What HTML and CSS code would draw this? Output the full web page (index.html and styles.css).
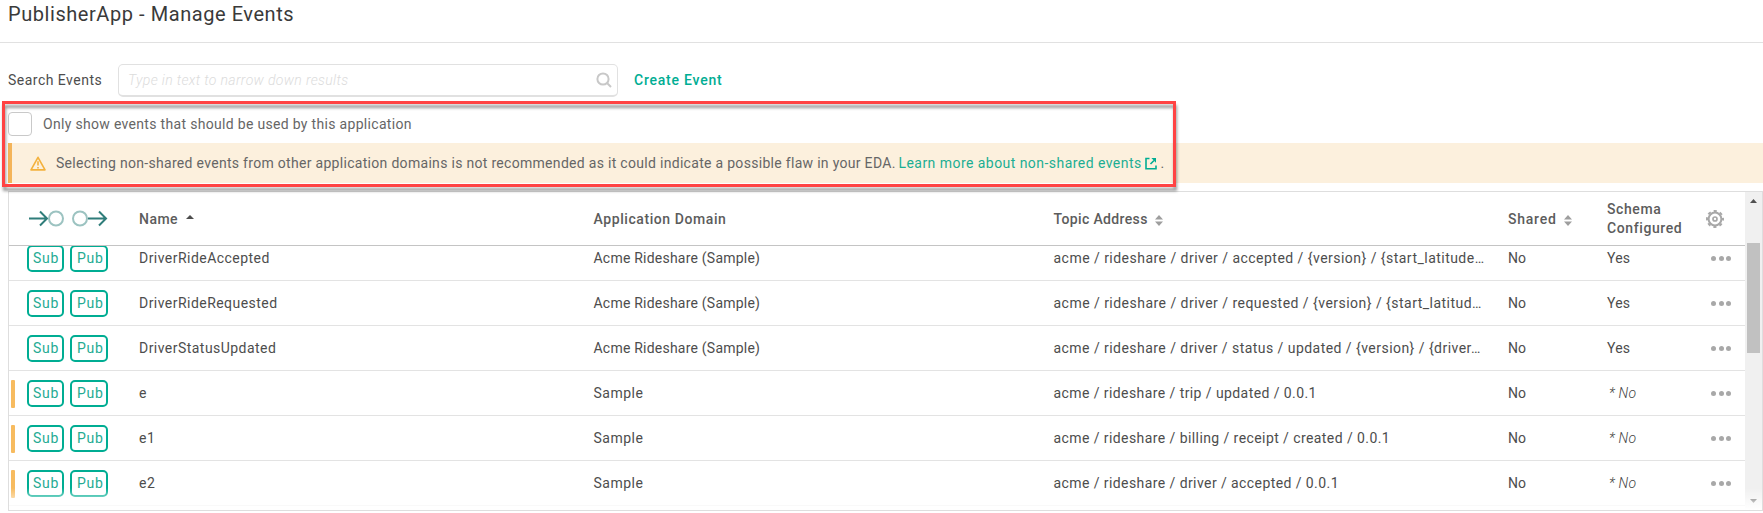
FILE: index.html
```html
<!DOCTYPE html>
<html lang="en">
<head>
<meta charset="utf-8">
<title>PublisherApp - Manage Events</title>
<link rel="stylesheet" href="styles.css">
</head>
<body>
<header class="title-bar"><h1>PublisherApp - Manage Events</h1></header>
<main>
  <div class="search-row">
    <label class="search-label">Search Events</label>
    <div class="search-box">
      <span class="placeholder">Type in text to narrow down results</span>
      <svg width="16" height="16" viewBox="0 0 16 16" fill="none" stroke="#c8c8c8" stroke-width="2"><circle cx="7" cy="7" r="5.6"/><path d="M11 11l4 4"/></svg>
    </div>
    <a class="create">Create Event</a>
  </div>
  <div class="filter-area">
    <div class="filter"><span class="checkbox"></span><span class="filter-text">Only show events that should be used by this application</span></div>
    <div class="warning">
      <svg class="warn-icon" width="16" height="15" viewBox="0 0 16 15" fill="none" stroke="#f3b13c" stroke-width="1.6" stroke-linejoin="round"><path d="M8 1.3L15 13.9H1z"/><path d="M8 5.3v4.2M8 10.9v1.5"/></svg>
      <span class="warn-text">Selecting non-shared events from other application domains is not recommended as it could indicate a possible flaw in your EDA.</span>
      <a class="learn">Learn more about non-shared events</a>
      <svg class="ext" width="12" height="13" viewBox="0 0 12 13" fill="none" stroke="#00ad93" stroke-width="1.6"><path d="M4.5 1.5H1v10.3h10V8.5M5.500 7L9 3.500"/><path d="M6.4 1H11v4.7z" fill="#00ad93" stroke="none"/></svg>
      <span class="dot">.</span>
    </div>
    <div class="highlight"></div>
  </div>
  <section class="table">
    <div class="grid">
      <div class="head">
        <span class="flow">
          <svg width="79" height="17" viewBox="0 0 79 17" fill="none"><g stroke="#2f7d7a" stroke-width="2"><path d="M0 8.5h18M11 1.5l7 7-7 7M59 8.5h18M70 1.5l7 7-7 7"/></g><g stroke="#9cc3c1" stroke-width="2"><circle cx="27" cy="8.5" r="7"/><circle cx="51" cy="8.5" r="7"/></g></svg>
        </span>
        <span class="h-name">Name<svg width="8" height="4" viewBox="0 0 8 4" fill="#4d4d4d"><path d="M0 4l4-4 4 4z"/></svg></span>
        <span class="h-domain">Application Domain</span>
        <span class="h-topic">Topic Address<svg class="sort" width="8" height="11" viewBox="0 0 8 11" fill="#9e9e9e"><path d="M0 4.5L4 0l4 4.5zM0 6.5h8L4 11z"/></svg></span>
        <span class="h-shared">Shared<svg class="sort" width="8" height="11" viewBox="0 0 8 11" fill="#9e9e9e"><path d="M0 4.5L4 0l4 4.5zM0 6.5h8L4 11z"/></svg></span>
        <span class="h-schema">Schema<br>Configured</span>
        <span class="gear"><svg width="18" height="18" viewBox="0 0 18 18" fill="none" stroke="#a8a8a8"><circle cx="9" cy="9" r="6.4" stroke-width="2"/><circle cx="9" cy="9" r="8" stroke-width="2" stroke-dasharray="3.14 3.143" stroke-dashoffset="1.57"/><circle cx="9" cy="9" r="2" stroke-width="1.7"/></svg></span>
      </div>
      <div class="rows">
        <div class="row"><span class="mark"></span><span class="badges"><b class="sub">Sub</b><b class="pub">Pub</b></span><span class="name">DriverRideAccepted</span><span class="domain">Acme Rideshare (Sample)</span><span class="topic">acme / rideshare / driver / accepted / {version} / {start_latitude…</span><span class="shared">No</span><span class="yes">Yes</span><span class="more"><i></i><i></i><i></i></span></div>
        <div class="row"><span class="mark"></span><span class="badges"><b class="sub">Sub</b><b class="pub">Pub</b></span><span class="name">DriverRideRequested</span><span class="domain">Acme Rideshare (Sample)</span><span class="topic">acme / rideshare / driver / requested / {version} / {start_latitud…</span><span class="shared">No</span><span class="yes">Yes</span><span class="more"><i></i><i></i><i></i></span></div>
        <div class="row"><span class="mark"></span><span class="badges"><b class="sub">Sub</b><b class="pub">Pub</b></span><span class="name">DriverStatusUpdated</span><span class="domain">Acme Rideshare (Sample)</span><span class="topic t-status">acme / rideshare / driver / status / updated / {version} / {driver…</span><span class="shared">No</span><span class="yes">Yes</span><span class="more"><i></i><i></i><i></i></span></div>
        <div class="row"><span class="mark on"></span><span class="badges"><b class="sub">Sub</b><b class="pub">Pub</b></span><span class="name">e</span><span class="domain d-short">Sample</span><span class="topic t-short">acme / rideshare / trip / updated / 0.0.1</span><span class="shared">No</span><span class="no">* No</span><span class="more"><i></i><i></i><i></i></span></div>
        <div class="row"><span class="mark on"></span><span class="badges"><b class="sub">Sub</b><b class="pub">Pub</b></span><span class="name">e1</span><span class="domain d-short">Sample</span><span class="topic t-short">acme / rideshare / billing / receipt / created / 0.0.1</span><span class="shared">No</span><span class="no">* No</span><span class="more"><i></i><i></i><i></i></span></div>
        <div class="row"><span class="mark on"></span><span class="badges"><b class="sub">Sub</b><b class="pub">Pub</b></span><span class="name">e2</span><span class="domain d-short">Sample</span><span class="topic t-short">acme / rideshare / driver / accepted / 0.0.1</span><span class="shared">No</span><span class="no">* No</span><span class="more"><i></i><i></i><i></i></span></div>
      </div>
    </div>
    <div class="scrollbar">
      <svg width="7" height="4" viewBox="0 0 7 4" fill="#505050"><path d="M0 4l3.5-4L7 4z"/></svg>
      <div class="thumb"></div>
      <svg width="7" height="4" viewBox="0 0 7 4" fill="#505050"><path d="M0 0h7L3.500 4z"/></svg>
    </div>
    <div class="fade"></div>
  </section>
</main>
</body>
</html>
```
FILE: styles.css
```css
* { box-sizing: border-box; }
body { margin: 0; height: 513px; overflow: hidden; background: #fff; color: #4d4d4d; font: 14px/20px Roboto, "Liberation Sans", sans-serif; white-space: nowrap; }
svg { display: block; flex: none; }
.title-bar { height: 43px; padding: 2px 0 0 8px; border-bottom: 1px solid #e1e1e1; }
h1 { margin: 0; font-size: 20px; line-height: 25px; font-weight: 400; letter-spacing: .56px; color: #3a3a3a; }
.search-row { display: flex; align-items: center; height: 58px; padding: 16px 0 0 8px; }
.search-label { width: 110px; letter-spacing: .48px; }
.search-box { display: flex; align-items: center; justify-content: space-between; width: 500px; height: 33px; padding: 0 5px 0 9px; border: 1px solid #e1e1e1; border-bottom-width: 2px; border-radius: 5px; }
.placeholder { font-style: italic; font-weight: 300; letter-spacing: .35px; color: #dcdcdc; }
.create { margin-left: 16px; font-weight: 500; letter-spacing: .78px; color: #00ad93; }
.filter-area { position: relative; height: 90px; padding: 11px 0 0 8px; color: #666; }
.filter { display: flex; align-items: center; height: 24px; }
.checkbox { width: 24px; height: 24px; border: 1px solid #c9c9c9; border-radius: 4px; }
.filter-text { margin-left: 11px; letter-spacing: .315px; }
.warning { display: flex; align-items: center; height: 40px; margin-top: 7px; padding-left: 18px; border-left: 4px solid #f4b459; background: #fcf0dd; }
.warn-text { margin-left: 10px; width: 842.500px; letter-spacing: .301px; }
.learn { width: 246px; letter-spacing: .45px; color: #1bae93; }
.dot { margin-left: 4px; }
.highlight { position: absolute; z-index: 1; left: 2px; top: 0; width: 1174px; height: 86px; border: 3px solid #ff4343; filter: drop-shadow(1px 4px 1.5px rgba(0, 0, 0, .4)); }
.table { position: relative; display: flex; height: 320px; margin-left: 8px; border: 1px solid #dedede; }
.grid { flex: 1; min-width: 0; }
.head, .row { display: grid; grid-template-columns: 130px 454.500px 460px 454.500px 99px 113px 25px; align-items: center; }
.head { height: 54px; border-bottom: 1px solid #c4c4c4; font-weight: 500; color: #5c5c5c; }
.head > span { display: flex; align-items: center; }
.flow { padding-left: 20px; }
.h-name { letter-spacing: .45px; }
.h-name svg { margin: -3px 0 0 8px; }
.h-domain { letter-spacing: .58px; }
.h-topic { letter-spacing: .36px; }
.h-shared { letter-spacing: .76px; }
.h-schema { line-height: 19px; letter-spacing: .6px; }
.head .sort { margin: 3px 0 0 7.500px; }
.head .gear { margin-left: -14px; }
.rows { height: 264px; overflow: hidden; }
.row { position: relative; height: 45px; border-bottom: 1px solid #e3e3e3; }
.row:first-child { margin-top: -10px; }
.mark { position: absolute; left: 2px; top: 9px; width: 4px; height: 28px; border-radius: 1px; }
.mark.on { background: #f7bb5f; }
.badges { display: flex; gap: 6px; padding-left: 18px; }
.badges b { height: 27px; border: 2px solid #00ad93; border-radius: 5px; line-height: 23px; font-weight: 400; letter-spacing: .7px; color: #25ab93; }
.sub { width: 37px; padding-left: 4px; }
.pub { width: 38px; padding-left: 5px; }
.name { letter-spacing: .46px; }
.domain { letter-spacing: .22px; }
.d-short { letter-spacing: .5px; }
.topic { letter-spacing: .47px; }
.t-status { letter-spacing: .455px; }
.t-short { letter-spacing: .42px; }
.yes { letter-spacing: .2px; }
.no { padding-left: 2px; font-style: italic; font-weight: 300; letter-spacing: .2px; color: #444; }
.more { display: flex; gap: 2.500px; margin-left: -9px; }
.more i { width: 5px; height: 5px; border-radius: 50%; background: #a8a8a8; }
.scrollbar { display: flex; flex-direction: column; align-items: center; width: 17px; padding: 7px 0; background: #f0f0f0; }
.thumb { width: 13px; height: 110px; margin: 40px 0 auto; background: #c1c1c1; }
.fade { position: absolute; left: 0; right: 0; bottom: 0; height: 22px; background: linear-gradient(rgba(255, 255, 255, 0), #fff); }
```
